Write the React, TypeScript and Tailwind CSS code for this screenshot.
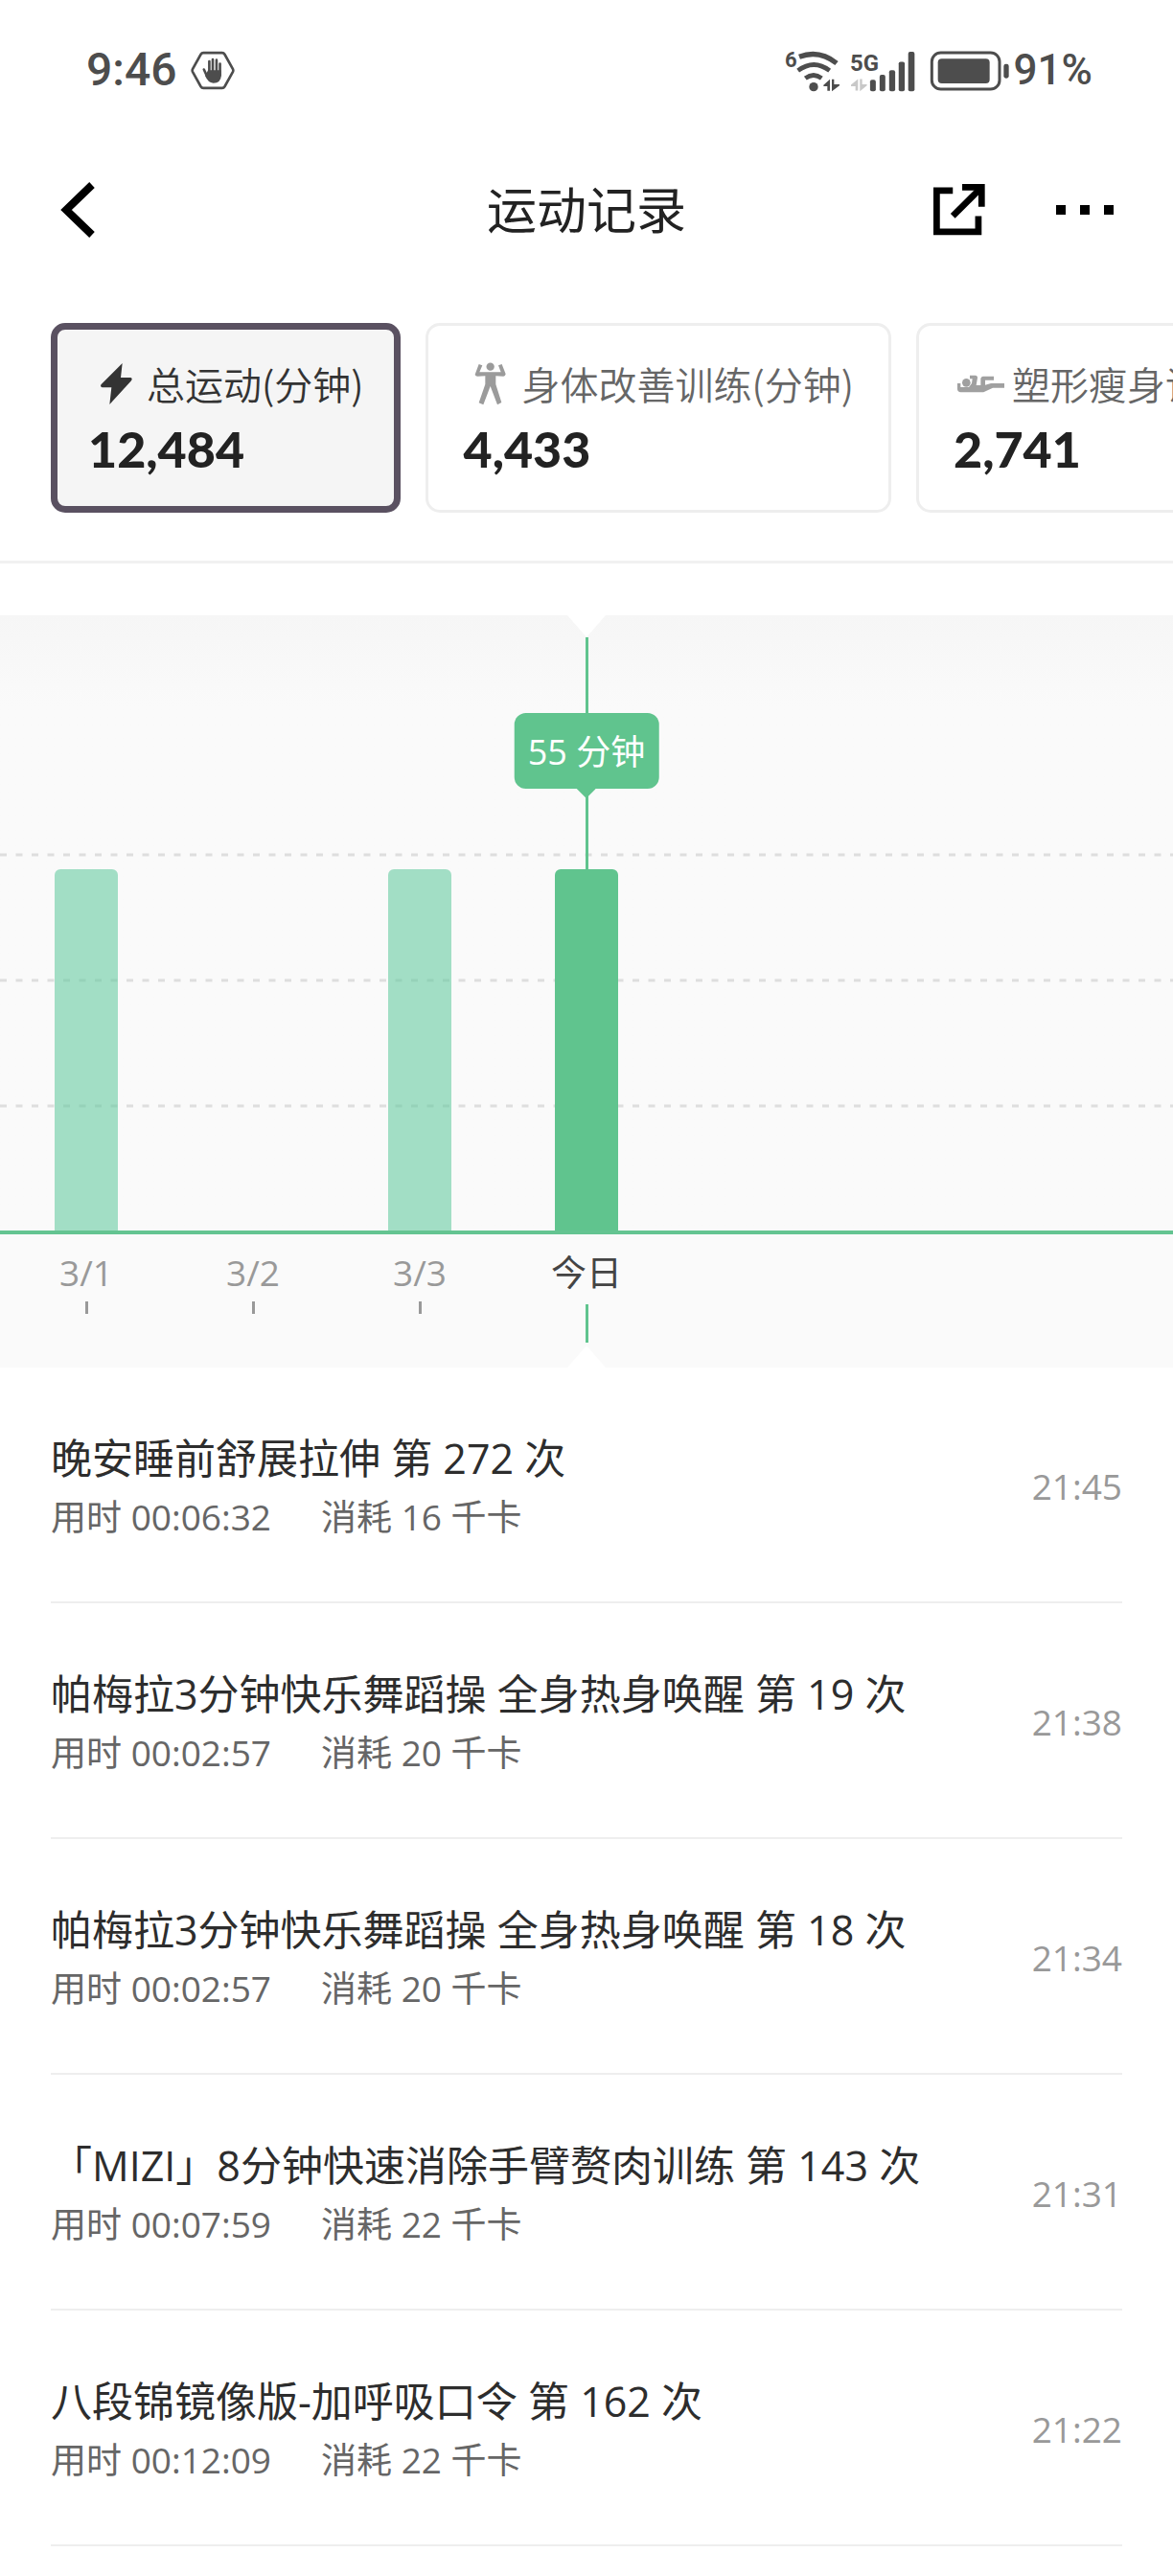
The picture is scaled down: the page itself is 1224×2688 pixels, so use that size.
import React, { useState } from 'react';

interface Category {
  id: string;
  label: string;
  minutes: number;
  icon: React.ReactNode;
}

interface Day {
  label: string;
  minutes: number;
  today?: boolean;
}

interface WorkoutRecord {
  title: string;
  count: number;
  duration: string;
  calories: number;
  time: string;
}

const BoltIcon = () => (
  <svg viewBox="183 171 150 135" className="w-[50px] h-[45px] shrink-0" fill="#333333" aria-hidden="true">
    <path d="M290 174 L285 219 H316 Q323 221 318 229 L250 303 L256 250 H227 Q219 247 224 240 Z" />
  </svg>
);

const BodyIcon = () => (
  <svg viewBox="153 171 150 135" className="w-[50px] h-[45px] shrink-0" fill="#9b9b9b" aria-hidden="true">
    <circle cx="239" cy="185" r="12.5" />
    <path d="M203 177 L214 181 L205 202 H272 L264 181 L275 177 L287 208 Q286 215 280 215 L256 214 V240 L274 297 L261 304 L239 246 L217 304 L203 298 L223 240 V214 L199 215 Q192 215 191 209 Z" />
  </svg>
);

const ShapeIcon = () => (
  <svg viewBox="183 171 150 135" className="w-[50px] h-[45px] shrink-0 overflow-visible" fill="#a0a0a0" aria-hidden="true">
    <circle cx="223" cy="235" r="13" />
    <path d="M195 237 H205 V249 H231 L240 237 L242 223 H234 V212 H252 Q259 213 258 220 L254 243 H268 V222 Q269 216 275 215 H309 V227 H282 V242 L300 237 H342 V251 H306 L280 263 Q277 265 272 265 H205 Q196 264 195 256 Z" />
  </svg>
);

const categories: Category[] = [
  { id: 'total', label: '总运动(分钟)', minutes: 12484, icon: <BoltIcon /> },
  { id: 'body', label: '身体改善训练(分钟)', minutes: 4433, icon: <BodyIcon /> },
  { id: 'shape', label: '塑形瘦身训练(分钟)', minutes: 2741, icon: <ShapeIcon /> },
];

const days: Day[] = [
  { label: '3/1', minutes: 55 },
  { label: '3/2', minutes: 0 },
  { label: '3/3', minutes: 55 },
  { label: '今日', minutes: 55, today: true },
  { label: '', minutes: 0 },
  { label: '', minutes: 0 },
  { label: '', minutes: 0 },
];

const records: WorkoutRecord[] = [
  { title: '晚安睡前舒展拉伸', count: 272, duration: '00:06:32', calories: 16, time: '21:45' },
  { title: '帕梅拉3分钟快乐舞蹈操 全身热身唤醒', count: 19, duration: '00:02:57', calories: 20, time: '21:38' },
  { title: '帕梅拉3分钟快乐舞蹈操 全身热身唤醒', count: 18, duration: '00:02:57', calories: 20, time: '21:34' },
  { title: '「MIZI」8分钟快速消除手臂赘肉训练', count: 143, duration: '00:07:59', calories: 22, time: '21:31' },
  { title: '八段锦镜像版-加呼吸口令', count: 162, duration: '00:12:09', calories: 22, time: '21:22' },
];

const MAX_BAR = 377;

const StatusBar = () => (
  <div className="flex h-[146px] items-center justify-between pl-[90px] pr-[84px] font-['Roboto',sans-serif] font-medium text-[#4d4d4d]">
    <div className="flex items-center gap-[14px]">
      <span className="text-[48px] leading-[48px]">9:46</span>
      <svg viewBox="412 67 140 124" className="w-[46px] h-[41px]" aria-hidden="true">
        <path d="M452 73 H512 Q517 73 520 78 L546 125 Q548 129 546 133 L520 180 Q517 185 512 185 H452 Q447 185 444 180 L418 133 Q416 129 418 125 L444 78 Q447 73 452 73 Z" fill="none" stroke="#4d4d4d" strokeWidth="8" />
        <g stroke="#4d4d4d" strokeLinecap="round" fill="none">
          <path d="M471 100 V140 M482 94 V140 M494 96 V140 M505 108 V145" strokeWidth="8" />
          <path d="M454 126 L464 148" strokeWidth="8" />
        </g>
        <path d="M467 128 H509 V144 Q508 169 484 169 Q466 168 458 146 Z" fill="#4d4d4d" />
      </svg>
    </div>
    <div className="flex items-center">
      <svg viewBox="57 55 174 135" className="w-[58px] h-[45px]" aria-hidden="true">
        <text x="57" y="111" fontSize="66" fontWeight="700" fill="#4d4d4d">6</text>
        <g fill="none" stroke="#4d4d4d" strokeWidth="14">
          <path d="M102 80 Q164 56 219 100" strokeWidth="16" />
          <path d="M98 123 Q148 86 197 123" />
          <path d="M121 147 Q147 128 172 147" />
        </g>
        <circle cx="147" cy="174" r="14" fill="#4d4d4d" />
        <path d="M198 150 V186 H190 V172 H178 V168 Z M204 150 H211 V166 H228 V170 L204 188 Z" fill="#4d4d4d" />
      </svg>
      <svg viewBox="261 55 208 135" className="ml-[10px] w-[69px] h-[45px]" aria-hidden="true">
        <text x="261" y="124" fontSize="72" fontWeight="700" fill="#4d4d4d">5G</text>
        <path d="M286 150 V186 H278 V172 H264 V168 Z M292 150 H299 V166 H314 V170 L292 188 Z" fill="#c8c8c8" />
        <g fill="#4d4d4d">
          <rect x="324" y="152" width="18" height="36" rx="6" />
          <rect x="354" y="136" width="18" height="52" rx="6" />
          <rect x="384" y="122" width="19" height="66" rx="6" />
          <rect x="414" y="95" width="19" height="93" rx="6" />
          <rect x="444" y="64" width="20" height="124" rx="6" />
        </g>
      </svg>
      <svg viewBox="511 55 252 135" className="ml-[14px] w-[84px] h-[45px]" aria-hidden="true">
        <rect x="518" y="67" width="212" height="114" rx="28" fill="none" stroke="#4d4d4d" strokeWidth="9" />
        <rect x="537" y="86" width="162" height="77" rx="12" fill="#4d4d4d" />
        <rect x="743" y="102" width="16" height="45" rx="7" fill="#4d4d4d" />
      </svg>
      <span className="ml-1 text-[44px] leading-[48px]">91%</span>
    </div>
  </div>
);

const Header = () => (
  <header className="grid h-[146px] grid-cols-3 items-center px-[62px]">
    <button type="button" aria-label="返回" className="justify-self-start">
      <svg viewBox="0 0 42 60" className="w-[42px] h-[60px]" fill="none" stroke="#000000" strokeWidth="8">
        <path d="M34 4 L7 30 L34 56" />
      </svg>
    </button>
    <h1 className="justify-self-center whitespace-nowrap text-[52px] leading-[60px] text-[#222222]">运动记录</h1>
    <div className="flex items-center gap-[74px] justify-self-end">
      <button type="button" aria-label="分享">
        <svg viewBox="222 96 160 160" className="w-[54px] h-[54px]" fill="none" stroke="#000000" strokeWidth="20">
          <path d="M282 116 H232 V244 H361 V195" />
          <path d="M311 106 H371 V166" />
          <path d="M282 195 L368 109" />
        </svg>
      </button>
      <button type="button" aria-label="更多" className="flex gap-[15px] py-5">
        <span className="size-[10px] bg-black" />
        <span className="size-[10px] bg-black" />
        <span className="size-[10px] bg-black" />
      </button>
    </div>
  </header>
);

const Chart = () => (
  <section className="relative mt-[54px] overflow-hidden bg-[#fafafa]">
    <div className="relative h-[642px] bg-linear-to-b from-[#f6f6f6] to-[#fafafa] to-15%">
      <svg className="absolute inset-x-0 bottom-0 h-[395px] w-full" stroke="#dedede" strokeWidth="3" strokeDasharray="7 9.5" aria-hidden="true">
        <line x1="0" x2="100%" y1="3" y2="3" />
        <line x1="0" x2="100%" y1="134" y2="134" />
        <line x1="0" x2="100%" y1="265" y2="265" />
      </svg>
      <div className="relative flex h-full items-end justify-center">
        {days.map((day, i) => (
          <div key={i} className="flex w-[174px] shrink-0 justify-center">
            {day.minutes > 0 && (
              <div
                className={`w-[66px] rounded-t-md ${day.today ? 'bg-[#60c48e]' : 'bg-[#62ca9e]/58'}`}
                style={{ height: (day.minutes / 55) * MAX_BAR }}
              />
            )}
          </div>
        ))}
      </div>
      {/* 选中日期的指示线和气泡 */}
      <div className="absolute left-1/2 top-[23px] -ml-px h-[242px] w-[3px] bg-[#60c48e]" />
      <div className="absolute left-1/2 top-[102px] flex -translate-x-1/2 flex-col items-center">
        <span className="whitespace-nowrap rounded-xl bg-[#60c48e] px-[14px] pb-[14px] pt-4 text-[36px] leading-[49px] text-white">
          55 分钟
        </span>
        <svg viewBox="0 0 20 10" className="w-5 h-[10px]" fill="#60c48e" aria-hidden="true">
          <path d="M0 0 H20 L10 10 Z" />
        </svg>
      </div>
    </div>

    <div className="flex h-[143px] justify-center border-t-4 border-[#64c491] pt-5">
      {days.map((day, i) => (
        <div key={i} className="flex w-[174px] shrink-0 flex-col items-center text-[37px] leading-[40px]">
          {day.label && (
            <>
              <span className={day.today ? 'text-[#444444]' : 'text-[#999999]'}>{day.label}</span>
              <span className={day.today ? 'mt-[13px] h-10 w-[3px] bg-[#60c48e]' : 'mt-[10px] h-[13px] w-[3px] bg-[#999999]'} />
            </>
          )}
        </div>
      ))}
    </div>

    <svg viewBox="0 0 40 23" className="absolute left-1/2 top-0 w-10 h-[23px] -translate-x-1/2" fill="#ffffff" aria-hidden="true">
      <path d="M0 0 H40 L20 23 Z" />
    </svg>
    <svg viewBox="0 0 40 23" className="absolute bottom-0 left-1/2 w-10 h-[23px] -translate-x-1/2" fill="#ffffff" aria-hidden="true">
      <path d="M0 23 H40 L20 0 Z" />
    </svg>
  </section>
);

export default function App() {
  const [selected, setSelected] = useState('total');

  return (
    <div className="min-h-screen bg-white font-['Open_Sans','Noto_Sans_CJK_SC',sans-serif]">
      <StatusBar />
      <Header />

      <nav className="flex gap-[26px] overflow-x-auto border-b-[3px] border-[#f1f1f1] pb-[50px] pl-[53px] pt-[45px] [scrollbar-width:none]">
        {categories.map(cat => (
          <button
            key={cat.id}
            type="button"
            onClick={() => setSelected(cat.id)}
            className={`flex h-[198px] shrink-0 flex-col items-start justify-center rounded-[15px] text-left ${
              selected === cat.id
                ? 'border-[7px] border-[#5a5161] bg-[#f5f5f5] px-8'
                : 'border-[3px] border-[#eeeeee] bg-white px-9'
            }`}
          >
            <span className="flex items-center gap-[11px]">
              {cat.icon}
              <span
                className={`whitespace-nowrap font-['Noto_Sans_CJK_SC',sans-serif] text-[40px] font-[350] leading-[48px] ${
                  selected === cat.id ? 'text-[#333333]' : 'text-[#666666]'
                }`}
              >
                {cat.label}
              </span>
            </span>
            <span className="mt-4 font-['Lato',sans-serif] text-[52px] font-black leading-[56px] text-[#222222]">
              {cat.minutes.toLocaleString('en-US')}
            </span>
          </button>
        ))}
      </nav>

      <Chart />

      <ul className="px-[53px]">
        {records.map(record => (
          <li key={record.time} className="flex items-center justify-between border-b-2 border-[#eeeeee] pb-[59px] pt-[63px]">
            <div>
              <h2 className="text-[43px] leading-[64px] text-[#2d2d2d]">
                {record.title} 第 {record.count} 次
              </h2>
              <p className="flex gap-[52px] text-[37px] leading-[58px] text-[#666666]">
                <span>用时 {record.duration}</span>
                <span>消耗 {record.calories} 千卡</span>
              </p>
            </div>
            <time className="text-[37px] leading-[58px] text-[#999999]">{record.time}</time>
          </li>
        ))}
      </ul>
    </div>
  );
}
